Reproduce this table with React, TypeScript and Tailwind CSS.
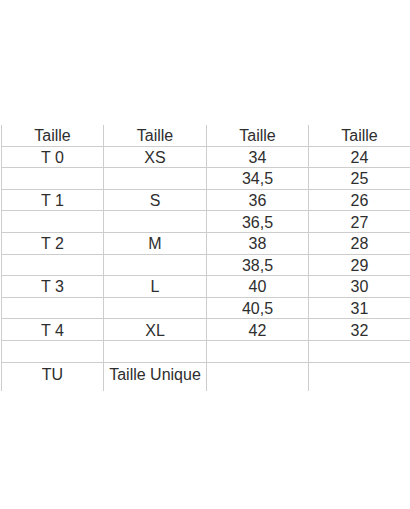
import React from "react";

const rows: string[][] = [
  ["Taille", "Taille", "Taille", "Taille"],
  ["T 0", "XS", "34", "24"],
  ["", "", "34,5", "25"],
  ["T 1", "S", "36", "26"],
  ["", "", "36,5", "27"],
  ["T 2", "M", "38", "28"],
  ["", "", "38,5", "29"],
  ["T 3", "L", "40", "30"],
  ["", "", "40,5", "31"],
  ["T 4", "XL", "42", "32"],
  ["", "", "", ""],
  ["TU", "Taille Unique", "", ""],
];

export default function App() {
  return (
    <div
      className="w-[410px] h-[509px] bg-white overflow-hidden text-[#2e2e2e]"
      style={{ fontFamily: '"Liberation Sans", Arial, sans-serif' }}
    >
      <div className="pt-[125px] ml-[1px]">
        {rows.map((r, i) => {
          const last = i === rows.length - 1;
          return (
            <div
              key={i}
              className={
                "grid grid-cols-[102px_103px_102px_102px] " +
                (last ? "h-[28px] items-start" : "h-[21.6px] border-b border-[#cdcdcd]")
              }
            >
              {r.map((c, j) => (
                <div
                  key={j}
                  className={
                    "flex justify-center text-[16px] leading-none border-l border-[#cdcdcd] " +
                    (last ? "items-start pt-[4px] h-full" : "items-center pt-[2px]")
                  }
                >
                  {c}
                </div>
              ))}
            </div>
          );
        })}
      </div>
    </div>
  );
}
